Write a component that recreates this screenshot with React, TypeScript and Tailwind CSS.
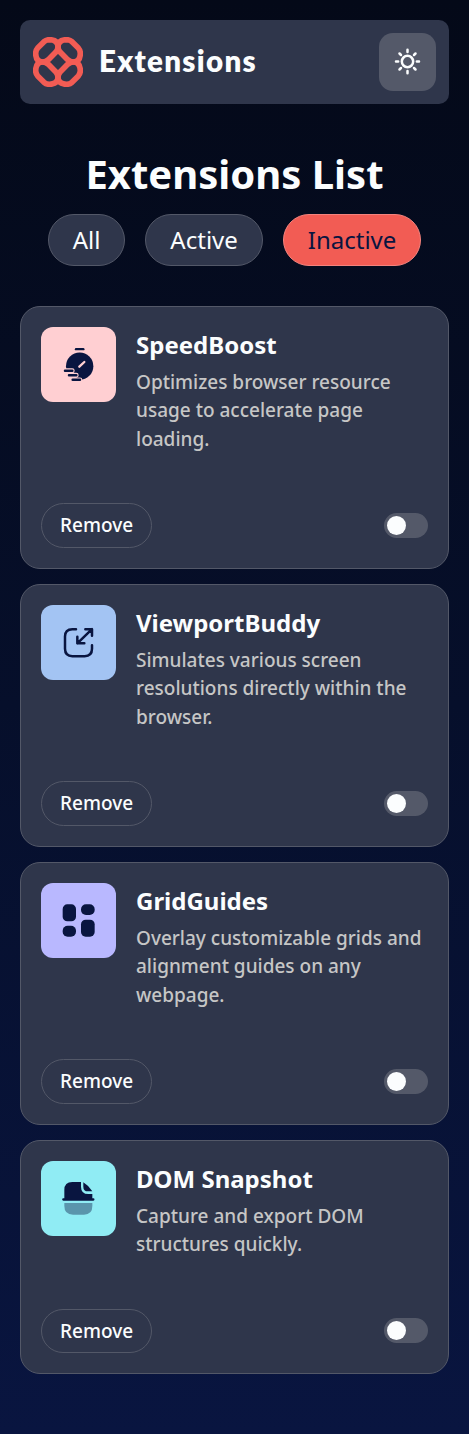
import { useState } from "react";
import type { ReactNode } from "react";

const ink = "#091540";
const petal = "M33 14 Q40 8 50 8 Q75 9 75 29 Q75 38 68 46 L46 68 Q38 75 29 75 Q9 75 8 50 Q8 40 14 33 Z";

function LogoMark() {
  return (
    <svg className="size-[50px] shrink-0" viewBox="0 0 150 150" fill="none" stroke="#f25c54" strokeWidth="17" strokeLinejoin="round">
      <path d={petal} />
      <path d={petal} transform="translate(150 0) scale(-1 1)" />
      <path d={petal} transform="translate(0 150) scale(1 -1)" />
      <path d={petal} transform="translate(150 150) scale(-1 -1)" />
    </svg>
  );
}

function SunIcon() {
  return (
    <svg className="size-[25px] overflow-visible" viewBox="0 0 75 75" fill="none" stroke="#fbfdfe" strokeWidth="7.500" strokeLinecap="round">
      <circle cx="37.500" cy="37.500" r="17" />
      <path d="M37.500 2v7M37.500 66v7M3 37.500h6.500M65.500 37.500h6.500M13.500 13.500l4.500 4.500M57 57l4.500 4.500M13.500 61.500l4.500-4.500M57 18l4.500-4.500" />
    </svg>
  );
}

function StopwatchIcon() {
  return (
    <svg className="size-full" viewBox="0 0 225 225" fill="none" strokeLinecap="round">
      <path d="M105 66.500h22" stroke={ink} strokeWidth="7" />
      <circle cx="116" cy="117.500" r="41" fill={ink} />
      <path d="M68 131h26M70 144.500h36M70 158.500h47" stroke="#ffcfd2" strokeWidth="14" />
      <path d="M115 119l15-14" stroke="#ffcfd2" strokeWidth="7" />
      <path d="M72 131h22M84 144.500h22M95 158.500h22" stroke={ink} strokeWidth="7.500" />
    </svg>
  );
}

function ResizeIcon() {
  return (
    <svg className="size-full" viewBox="0 0 225 225" fill="none" stroke={ink} strokeWidth="7.500" strokeLinecap="round" strokeLinejoin="round">
      <path d="M105 72.500H94c-16 0-22 7-22 22v37c0 16 7 22 22 22h37c16 0 22-7 22-22v-11" />
      <path d="M109 115l44-42.500M133 72.500h20v20M109 95v20h21" />
    </svg>
  );
}

function GridIcon() {
  return (
    <svg className="size-full" viewBox="0 0 225 225" fill={ink}>
      <rect x="65" y="64" width="40" height="51" rx="14" />
      <rect x="120" y="64" width="41" height="32" rx="15" />
      <rect x="65" y="128" width="40" height="33" rx="15" />
      <rect x="120" y="110" width="41" height="51" rx="14" />
    </svg>
  );
}

function SnapshotIcon() {
  return (
    <svg className="size-full" viewBox="0 0 225 225" fill={ink}>
      <path d="M70 112V87q0-24 24-24h26v14q0 22 22 22h12v13h3a3.500 3.500 0 010 7H67a3.500 3.500 0 010-7z" />
      <path d="M127 64q16 10 27 27h-13q-14 0-14-14z" />
      <path d="M70 126h84v9q0 26-25 26H96q-26 0-26-26z" opacity="0.400" />
    </svg>
  );
}

type Extension = { name: string; description: string; tile: string; icon: ReactNode };

const extensions: Extension[] = [
  { name: "SpeedBoost", description: "Optimizes browser resource usage to accelerate page loading.", tile: "bg-[#ffcfd2]", icon: <StopwatchIcon /> },
  { name: "ViewportBuddy", description: "Simulates various screen resolutions directly within the browser.", tile: "bg-[#a3c4f3]", icon: <ResizeIcon /> },
  { name: "GridGuides", description: "Overlay customizable grids and alignment guides on any webpage.", tile: "bg-[#b9b8ff]", icon: <GridIcon /> },
  { name: "DOM Snapshot", description: "Capture and export DOM structures quickly.", tile: "bg-[#90ecf4]", icon: <SnapshotIcon /> },
];

function ExtensionCard({ name, description, tile, icon }: Extension) {
  const [on, setOn] = useState(false);
  return (
    <article className="flex flex-col gap-[49.9px] rounded-[20px] border border-[#535868] bg-[#2f364b] p-5">
      <div className="flex items-start gap-5">
        <div className={`size-[75px] shrink-0 overflow-hidden rounded-[12px] ${tile}`}>{icon}</div>
        <div>
          <h2 className="text-[24px] leading-[36px] font-bold text-[#fbfdfe]">{name}</h2>
          <p className="mt-[4.8px] text-[19px] leading-[28.5px] font-medium text-[#c6c6c6]">{description}</p>
        </div>
      </div>
      <div className="flex items-center justify-between">
        <button className="rounded-full border border-[#535868] px-[18px] py-[7px] text-[19px] leading-[28.5px] font-medium text-[#fbfdfe]">Remove</button>
        <button
          role="switch"
          aria-checked={on}
          onClick={() => setOn(!on)}
          className={`flex h-[25px] w-11 items-center rounded-full px-[3px] ${on ? "justify-end bg-[#f25c54]" : "bg-[#545969]"}`}
        >
          <span className="size-[19px] rounded-full bg-[#fbfdfe]" />
        </button>
      </div>
    </article>
  );
}

const filters = ["All", "Active", "Inactive"];

export default function App() {
  const [filter, setFilter] = useState("Inactive");
  return (
    <div className="min-h-screen bg-linear-to-b from-[#040918] to-[#091540] p-5 font-['Noto_Sans',sans-serif]">
      <header className="flex h-[84px] items-start justify-between rounded-[10px] bg-[#2f364b] p-[13px]">
        <div className="flex h-[57px] items-center gap-4">
          <LogoMark />
          <span className="pb-px font-['Lato',sans-serif] text-[29.5px] leading-none font-extrabold tracking-[1.3px] text-[#fbfdfe]">Extensions</span>
        </div>
        <button aria-label="Toggle theme" className="flex h-[58px] w-[57px] items-center justify-center rounded-[14px] bg-[#545969] pb-px">
          <SunIcon />
        </button>
      </header>
      <main>
        <h1 className="mt-10 text-center text-[40px] leading-[60px] font-bold text-[#fbfdfe]">Extensions List</h1>
        <nav className="mt-[10px] flex justify-center gap-5">
          {filters.map((f) => (
            <button
              key={f}
              onClick={() => setFilter(f)}
              className={`h-[52px] rounded-full border px-6 text-[24px] leading-[36px] ${
                f === filter ? "border-[#f4837d] bg-[#f25c54] text-[#091540]" : "border-[#535868] bg-[#2f364b] text-[#fbfdfe]"
              }`}
            >
              {f}
            </button>
          ))}
        </nav>
        <section className="mt-10 flex flex-col gap-[15.3px]">
          {extensions.map((e) => (
            <ExtensionCard key={e.name} {...e} />
          ))}
        </section>
      </main>
    </div>
  );
}
